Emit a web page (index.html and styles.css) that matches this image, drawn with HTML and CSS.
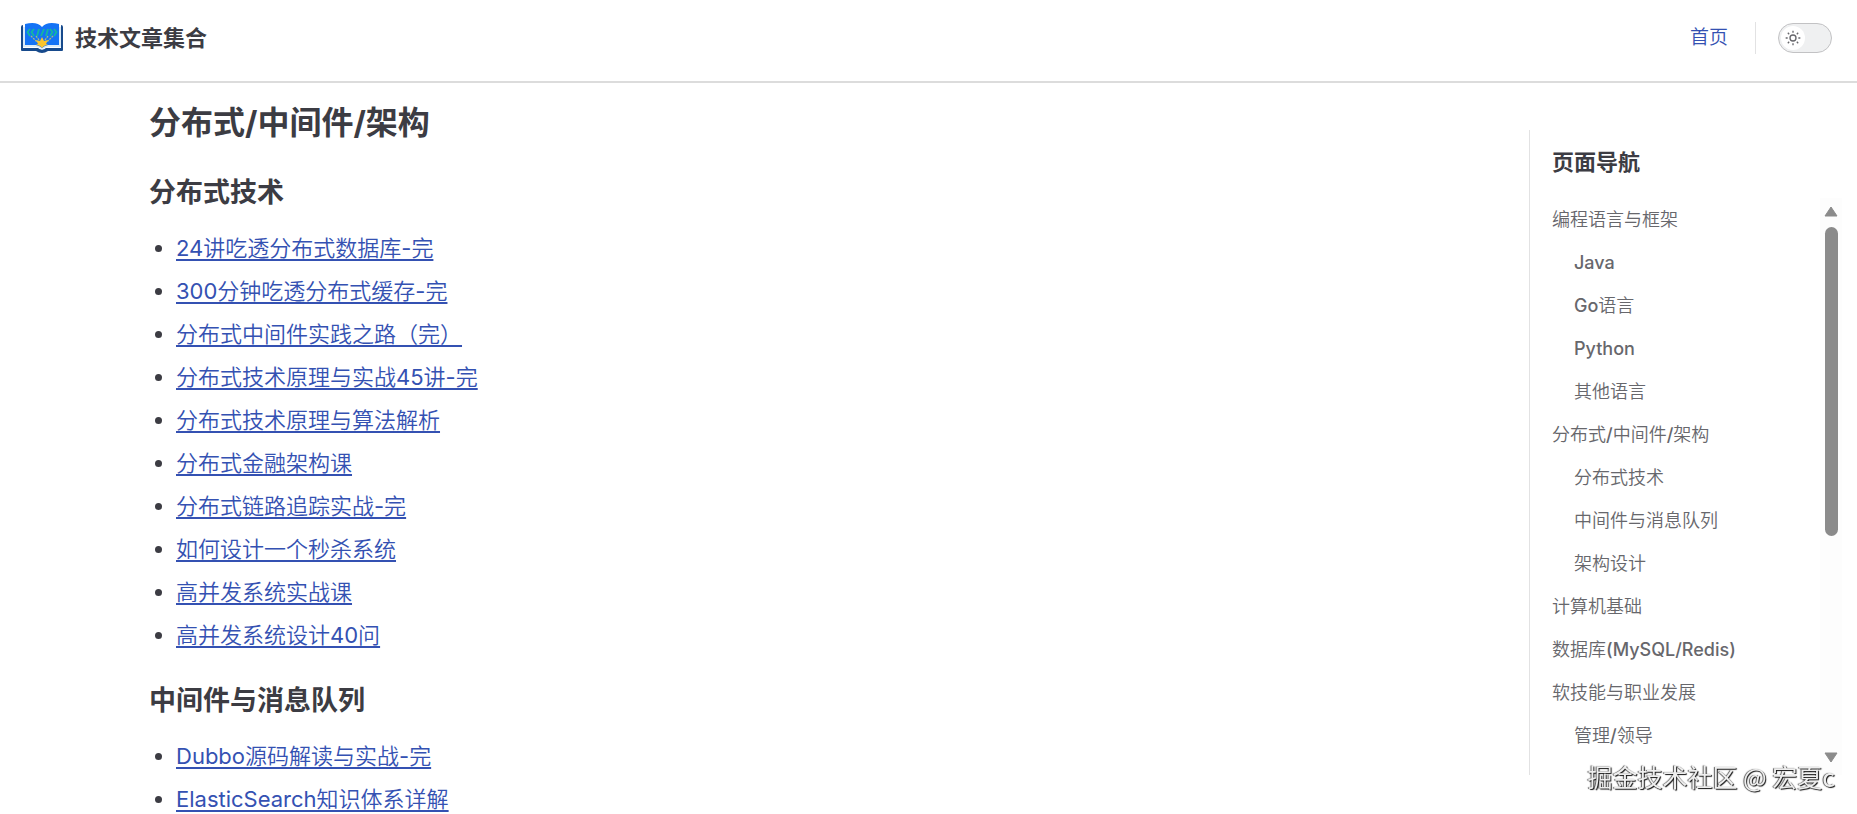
FILE: index.html
```html
<!DOCTYPE html>
<html lang="zh-CN">
<head>
    <meta charset="UTF-8">
    <meta name="viewport" content="width=device-width, initial-scale=1.0">
    <title>技术文章集合</title>
    <link rel="stylesheet" href="styles.css">
</head>
<body>
    <header class="navbar">
        <a class="brand" href="#">
            <svg class="logo" viewBox="0 0 44 32" aria-hidden="true">
                <path d="M1 5Q1 3 3 3V26H18Q22 29 26 26H41V3Q43 3 43 5V28Q43 29 42 29H28Q22 33 16 29H2Q1 29 1 28Z" fill="#174a8c"/>
                <path d="M3 5H41V25H29Q24 25 22 28Q20 25 15 25H3Z" fill="#dcecf8"/>
                <path d="M5 2Q17-1 22 5Q27-1 39 2V23H28Q24 24 22 26Q20 24 16 23H5Z" fill="#1473f5"/>
                <g fill="none" stroke="#14b8a0" stroke-width="1.8">
                    <path d="M10 7L7.500 10L10 14M14 7L11.500 10L14 14M19 7L17 14M24 7L21 14M28 7L26 14M30 7L32.500 10L30 14M34 7L36.500 10L34 14"/>
                </g>
                <path d="M11 14L17 20M16 14L19 18M33 14L27 20M28 14L25 18" stroke="#b4bf75" stroke-width="1.2" stroke-dasharray="2 1"/>
                <path d="M22 15L24 19L28 18L26 22L28 23Q24 23 22 26Q20 23 16 23L18 22L16 18L20 19Z" fill="#fbc52d"/>
            </svg>
            <span>技术文章集合</span>
        </a>
        <div class="nav-right">
            <a class="nav-link" href="#">首页</a>
            <button class="switch" type="button" role="switch" aria-checked="false" aria-label="切换深色模式">
                <span class="switch-thumb">
                    <svg viewBox="0 0 24 24" aria-hidden="true">
                        <circle cx="12" cy="12" r="4.500"/>
                        <path d="M12 1V4M12 20V23M1 12H4M20 12H23M4.200 4.200L6.300 6.300M17.700 17.700L19.800 19.800M4.200 19.800L6.300 17.700M17.700 6.300L19.800 4.200"/>
                    </svg>
                </span>
            </button>
        </div>
    </header>

    <div class="layout">
        <main class="content">
            <h2>分布式/中间件/架构</h2>
            <h3>分布式技术</h3>
            <ul>
                <li><a href="#">24讲吃透分布式数据库-完</a></li>
                <li><a href="#">300分钟吃透分布式缓存-完</a></li>
                <li><a href="#">分布式中间件实践之路（完）</a></li>
                <li><a href="#">分布式技术原理与实战45讲-完</a></li>
                <li><a href="#">分布式技术原理与算法解析</a></li>
                <li><a href="#">分布式金融架构课</a></li>
                <li><a href="#">分布式链路追踪实战-完</a></li>
                <li><a href="#">如何设计一个秒杀系统</a></li>
                <li><a href="#">高并发系统实战课</a></li>
                <li><a href="#">高并发系统设计40问</a></li>
            </ul>
            <h3>中间件与消息队列</h3>
            <ul>
                <li><a href="#">Dubbo源码解读与实战-完</a></li>
                <li><a href="#">ElasticSearch知识体系详解</a></li>
            </ul>
        </main>

        <aside class="outline">
            <div class="outline-title">页面导航</div>
            <div class="outline-body">
                <nav class="outline-nav" aria-label="页面导航">
                    <a href="#">编程语言与框架</a>
                    <a class="nested" href="#">Java</a>
                    <a class="nested" href="#">Go语言</a>
                    <a class="nested" href="#">Python</a>
                    <a class="nested" href="#">其他语言</a>
                    <a href="#">分布式/中间件/架构</a>
                    <a class="nested" href="#">分布式技术</a>
                    <a class="nested" href="#">中间件与消息队列</a>
                    <a class="nested" href="#">架构设计</a>
                    <a href="#">计算机基础</a>
                    <a href="#">数据库(MySQL/Redis)</a>
                    <a href="#">软技能与职业发展</a>
                    <a class="nested" href="#">管理/领导</a>
                </nav>
                <div class="scrollbar" aria-hidden="true">
                    <svg viewBox="0 0 14 11"><path d="M7 1L13 10H1Z"/></svg>
                    <div class="track"><div class="thumb"></div></div>
                    <svg viewBox="0 0 14 11"><path d="M7 10L1 1H13Z"/></svg>
                </div>
            </div>
        </aside>
    </div>

    <div class="watermark">掘金技术社区 @ 宏夏c</div>
</body>
</html>
```

FILE: styles.css
```css
:root {
    --text-1: #3c3c43;
    --text-2: #67676c;
    --brand: #3451b2;
    --divider: #e2e2e3;
    --font-light: Inter, "Noto Sans CJK SC DemiLight", "Noto Sans CJK SC Light", "Noto Sans CJK SC", sans-serif;
}
* { box-sizing: border-box; }
body {
    margin: 0;
    height: 100vh;
    overflow: hidden;
    font-family: Inter, "Noto Sans CJK SC", sans-serif;
    font-size: 22px;
    color: var(--text-1);
    background: #fff;
}
a { color: inherit; text-decoration: none; }

/* navbar */
.navbar {
    display: flex;
    justify-content: space-between;
    align-items: center;
    height: 83px;
    padding: 0 25px 5px 20px;
    border-bottom: 2px solid #dcdcdc;
}
.brand {
    display: flex;
    align-items: center;
    gap: 11px;
    font-weight: 700;
    line-height: 30px;
}
.logo { width: 44px; height: 32px; }
.nav-right { display: flex; align-items: center; }
.nav-link {
    padding-right: 27px;
    margin-right: 22px;
    border-right: 1px solid var(--divider);
    font-family: var(--font-light);
    font-size: 19px;
    font-weight: 500;
    line-height: 32px;
    color: var(--brand);
}
.switch {
    width: 54px;
    height: 30px;
    padding: 2px;
    border: 1px solid #c2c2c4;
    border-radius: 15px;
    background: #eff0f1;
    cursor: pointer;
}
.switch-thumb {
    display: flex;
    align-items: center;
    justify-content: center;
    width: 24px;
    height: 24px;
    border-radius: 50%;
    background: #fff;
}
.switch-thumb svg {
    width: 16px;
    height: 16px;
    fill: none;
    stroke: var(--text-2);
    stroke-width: 2;
}

/* page */
.layout {
    display: grid;
    grid-template-columns: 1fr 313px;
    align-items: start;
    padding: 0 15px 0 149px;
}
.content { padding-top: 20px; }
h2, h3 { margin: 0; font-weight: 700; }
h2 { font-size: 32px; line-height: 40px; }
h3 {
    margin: 31px 0 20px;
    font-size: 27px;
    line-height: 38px;
}
ul { margin: 0; padding-left: 27px; }
li { line-height: 32px; }
li + li { margin-top: 11px; }
li a {
    font-family: var(--font-light);
    color: var(--brand);
    text-decoration: underline;
    text-decoration-thickness: 2px;
    text-underline-offset: 3px;
}

/* outline */
.outline {
    margin-top: 47px;
    padding: 16px 0 0 22px;
    border-left: 1px solid var(--divider);
}
.outline-title {
    margin-bottom: 20px;
    font-weight: 700;
    line-height: 32px;
}
.outline-body { display: flex; justify-content: space-between; }
.outline-nav {
    padding-bottom: 18px;
    font-family: var(--font-light);
    font-size: 18px;
    font-weight: 500;
    line-height: 43px;
    color: var(--text-2);
}
.outline-nav a { display: block; }
.outline-nav .nested { padding-left: 22px; }
.scrollbar {
    display: flex;
    flex-direction: column;
    align-items: center;
    gap: 10px;
    width: 22px;
    padding: 8px 0 12px;
    background: #fdfdfd;
}
.scrollbar svg {
    width: 14px;
    height: 11px;
    fill: #8b8b8b;
    stroke: #8b8b8b;
    stroke-width: 1;
    stroke-linejoin: round;
}
.track { flex: 1; width: 13px; }
.thumb {
    height: 60%;
    border-radius: 7px;
    background: #8b8b8b;
}

.watermark {
    position: fixed;
    right: 22px;
    bottom: 20px;
    font-family: "Noto Sans CJK SC", sans-serif;
    font-size: 25px;
    line-height: 36px;
    color: #eee;
    text-shadow: 1px 1px 1px #111, -1px 0 1px #555;
}
```
